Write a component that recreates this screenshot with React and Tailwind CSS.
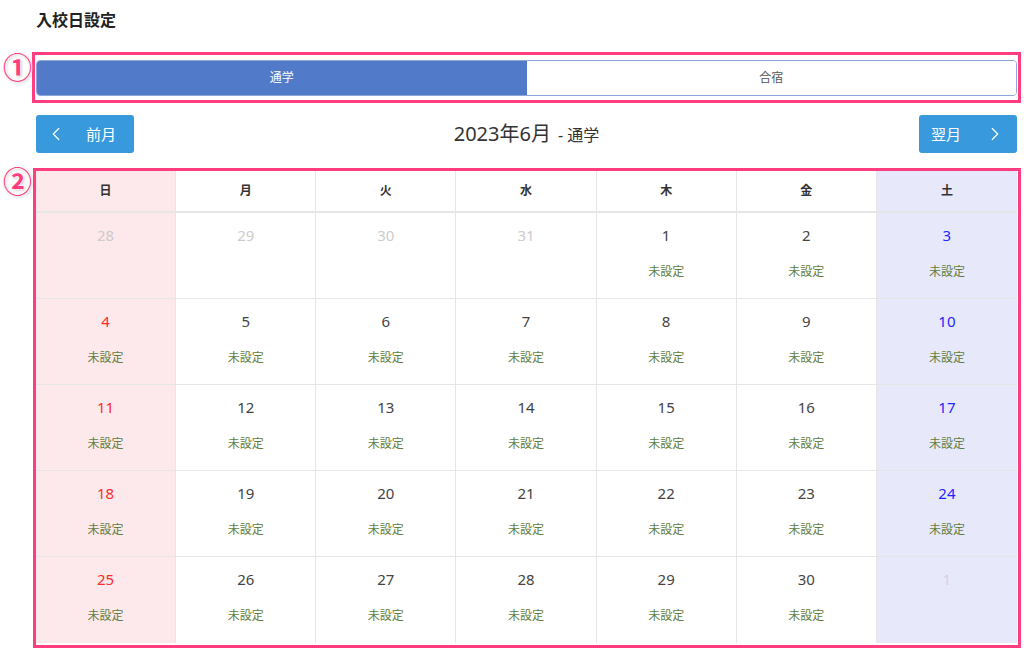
import { ChevronLeft, ChevronRight } from 'lucide-react';

const FONT = { fontFamily: '"Noto Sans", "Noto Sans CJK JP", sans-serif' };

const WEEKDAYS = ['日', '月', '火', '水', '木', '金', '土'];

// 2023年6月: starts on Thursday
const WEEKS = [
  [28, 29, 30, 31, 1, 2, 3],
  [4, 5, 6, 7, 8, 9, 10],
  [11, 12, 13, 14, 15, 16, 17],
  [18, 19, 20, 21, 22, 23, 24],
  [25, 26, 27, 28, 29, 30, 1],
];

function colBg(i) {
  if (i === 0) return 'bg-[#fde9eb]';
  if (i === 6) return 'bg-[#e8e8fb]';
  return 'bg-white';
}

function numColor(i, outside) {
  if (outside) return i === 6 ? 'text-[#cfcfe6]' : 'text-[#cccccc]';
  if (i === 0) return 'text-[#ff2b2b]';
  if (i === 6) return 'text-[#2525ff]';
  return 'text-[#444444]';
}

function Marker({ children, className }) {
  return (
    <span
      className={`absolute text-[29px] leading-none font-bold text-[#ff3d7f] ${className}`}
      style={{ textShadow: '0 0 2px #fff, 0 0 2px #fff, 0 0 3px #fff, 1px 1px 3px rgba(0,0,0,0.35)' }}
    >
      {children}
    </span>
  );
}

export default function App() {
  return (
    <div className="w-[1024px] h-[648px] bg-white overflow-hidden" style={FONT}>
      <div className="ml-[36px] w-[981px]">
        {/* Title */}
        <h1 className="pt-[9px] text-[16px] font-bold text-[#222] leading-[22px]">入校日設定</h1>

        {/* Segmented control */}
        <div className="relative mt-[29px]">
          <div className="absolute -left-[4px] -right-[4px] -top-[8px] -bottom-[7px] border-[3px] border-[#ff3d7f] pointer-events-none" />
          <Marker className="-left-[33px] -top-[7px]">①</Marker>
          <div className="flex h-[36px] rounded-[4px] border border-[#8ea6dc] overflow-hidden">
            <div className="flex-1 flex items-center justify-center bg-[#517bc9] text-white text-[12px]">通学</div>
            <div className="flex-1 flex items-center justify-center bg-white text-[#555] text-[12px]">合宿</div>
          </div>
        </div>

        {/* Month navigation */}
        <div className="mt-[19px] flex items-center justify-between h-[38px]">
          <button className="w-[98px] h-[38px] rounded-[3px] bg-[#3899dd] text-white flex items-center pl-[9px] gap-[19px]">
            <ChevronLeft size={22} strokeWidth={1.3} />
            <span className="text-[15px]">前月</span>
          </button>
          <div className="text-[#333] flex items-baseline gap-[7px]">
            <span className="text-[20px]">2023年6月</span>
            <span className="text-[16px]">- 通学</span>
          </div>
          <button className="w-[98px] h-[38px] rounded-[3px] bg-[#3899dd] text-white flex items-center justify-end pr-[11px] gap-[23px]">
            <span className="text-[15px]">翌月</span>
            <ChevronRight size={22} strokeWidth={1.3} />
          </button>
        </div>

        {/* Calendar */}
        <div className="relative mt-[18px]">
          <div className="absolute -left-[3px] -right-[4px] -top-[3px] -bottom-[5px] border-[3px] border-[#ff3d7f] pointer-events-none" />
          <Marker className="-left-[33px] -top-[4px]">②</Marker>
          <div className="grid grid-cols-7 h-[42px] border-b-2 border-[#e6e6e6]">
            {WEEKDAYS.map((d, i) => (
              <div
                key={d}
                className={`flex items-center justify-center text-[12px] font-bold text-[#333] border-r border-[#e6e6e6] last:border-r-0 ${colBg(i)}`}
              >
                {d}
              </div>
            ))}
          </div>
          {WEEKS.map((week, w) => (
            <div key={w} className="grid grid-cols-7 h-[86px] border-b border-[#e6e6e6] last:border-b-0">
              {week.map((n, i) => {
                const outside = (w === 0 && n > 20) || (w === 4 && n < 10);
                return (
                  <div
                    key={i}
                    className={`flex flex-col items-center pt-[11px] border-r border-[#e6e6e6] last:border-r-0 ${colBg(i)}`}
                  >
                    <span className={`text-[15px] leading-[22px] ${numColor(i, outside)}`}>{n}</span>
                    {!outside && (
                      <span className="mt-[18px] text-[12px] leading-[16px] text-[#5f7d3e]">未設定</span>
                    )}
                  </div>
                );
              })}
            </div>
          ))}
        </div>
      </div>
    </div>
  );
}
